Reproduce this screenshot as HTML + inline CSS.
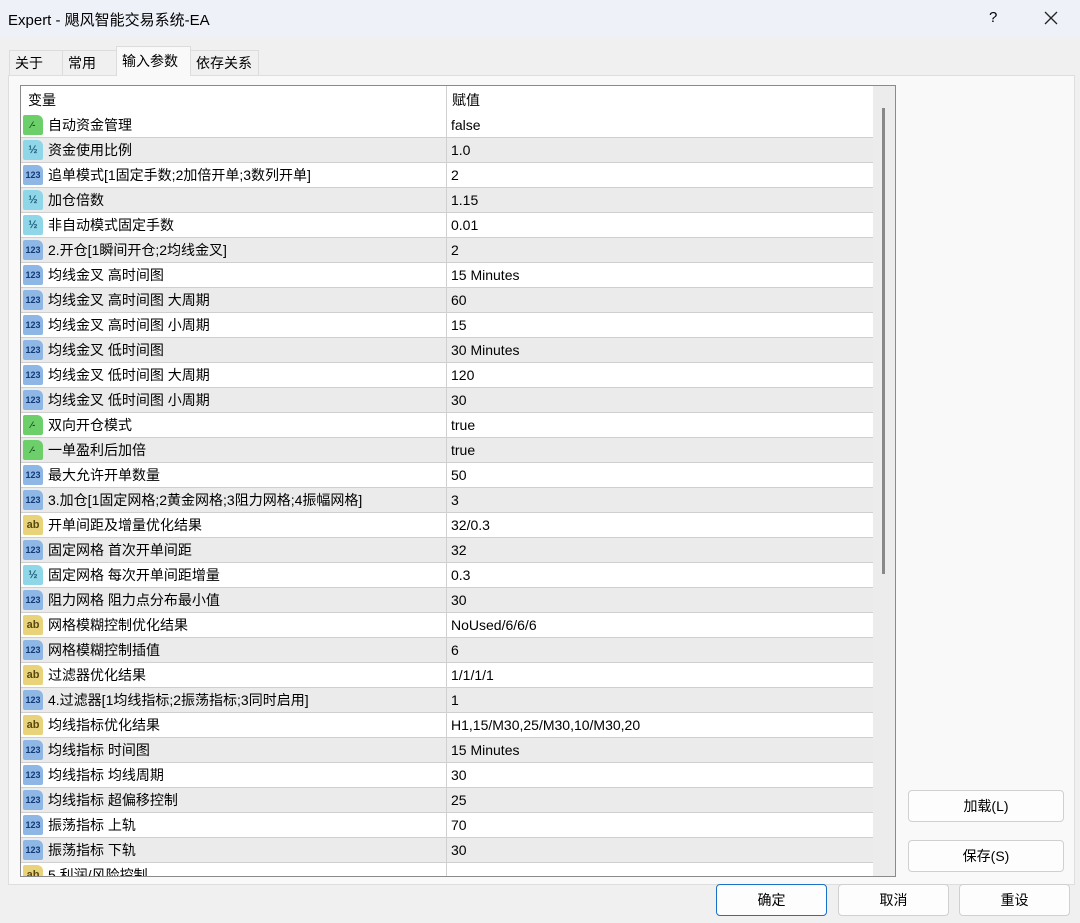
<!DOCTYPE html>
<html><head><meta charset="utf-8"><style>
*{margin:0;padding:0;box-sizing:border-box}
body{width:1080px;height:923px;background:#f0f0f0;font-family:"Liberation Sans","Noto Sans CJK SC",sans-serif;font-size:14px;color:#000;position:relative;overflow:hidden}
.title{position:absolute;left:0;top:0;width:1080px;height:37px;background:#eef1f8}
.title .t{position:absolute;left:8px;top:9px;font-size:15px}
.title .q{position:absolute;left:989px;top:9px;font-size:15px}
.title .x{position:absolute;left:1043px;top:10px}
.tab{position:absolute;top:50px;height:26px;border:1px solid #dcdcdc;border-bottom:none;background:#f0f0f0;padding:0 5px;line-height:25px;font-size:14px;white-space:nowrap}
.tab.a{top:46px;height:30px;background:#f9f9f9;z-index:2;line-height:28px}
.panel{position:absolute;left:8px;top:75px;width:1067px;height:810px;background:#f9f9f9;border:1px solid #dedede}
.tbl{position:absolute;left:20px;top:85px;width:876px;height:792px;border:1px solid #8a8a8a;background:#fff;overflow:hidden}
.hdr{position:absolute;left:0;top:0;height:27px;width:852px;line-height:27px}
.hdr span{position:absolute;top:1px}
.row{position:absolute;left:0;width:852px;height:25px;border-bottom:1px solid #cfcfcf;line-height:24px}
.row.g{background:#ebebeb}
.row .n{position:absolute;left:27px;top:0;white-space:nowrap}
.row .v{position:absolute;left:430px;top:0;white-space:nowrap}
.col{position:absolute;left:425px;top:0;width:1px;height:792px;background:#d0d0d0}
.ic{position:absolute;left:2px;top:2px;width:20px;height:20px;border-radius:2px 6px 2px 2px;font-size:9px;font-weight:bold;text-align:center;line-height:20px;font-style:normal;font-family:"Liberation Sans",sans-serif}
.b{background:#6ccf6a;color:#14501a}
.d{background:#8fd6e8;color:#1d5c7a;font-size:11px}
.i{background:#8fb7e6;color:#123a77}
.s{background:#e8d27a;color:#5a4a10;font-size:11px}
.sb{position:absolute;left:852px;top:0;width:22px;height:792px;background:#ececec}
.th{position:absolute;left:9px;top:22px;width:3px;height:466px;background:#888}
.btn{position:absolute;height:32px;border:1px solid #d0d0d0;border-radius:4px;background:#fdfdfd;text-align:center;line-height:30px;font-size:14px}
</style></head><body>
<div class="title"><span class="t">Expert - 飓风智能交易系统-EA</span><span class="q">?</span>
<svg class="x" width="16" height="16" viewBox="0 0 16 16"><path d="M2 2L14 14M14 2L2 14" stroke="#222" stroke-width="1.3"/></svg></div>
<div class="tab" style="left:9px;width:54px">关于</div>
<div class="tab" style="left:62px;width:55px">常用</div>
<div class="tab a" style="left:116px;width:75px">输入参数</div>
<div class="tab" style="left:190px;width:69px">依存关系</div>
<div class="panel"></div>
<div class="tbl">
<div class="hdr"><span style="left:7px">变量</span><span style="left:431px">赋值</span></div>
<div class="row" style="top:27px"><i class="ic b">⁄-</i><span class="n">自动资金管理</span><span class="v">false</span></div>
<div class="row g" style="top:52px"><i class="ic d">½</i><span class="n">资金使用比例</span><span class="v">1.0</span></div>
<div class="row" style="top:77px"><i class="ic i">123</i><span class="n">追单模式[1固定手数;2加倍开单;3数列开单]</span><span class="v">2</span></div>
<div class="row g" style="top:102px"><i class="ic d">½</i><span class="n">加仓倍数</span><span class="v">1.15</span></div>
<div class="row" style="top:127px"><i class="ic d">½</i><span class="n">非自动模式固定手数</span><span class="v">0.01</span></div>
<div class="row g" style="top:152px"><i class="ic i">123</i><span class="n">2.开仓[1瞬间开仓;2均线金叉]</span><span class="v">2</span></div>
<div class="row" style="top:177px"><i class="ic i">123</i><span class="n">均线金叉 高时间图</span><span class="v">15 Minutes</span></div>
<div class="row g" style="top:202px"><i class="ic i">123</i><span class="n">均线金叉 高时间图 大周期</span><span class="v">60</span></div>
<div class="row" style="top:227px"><i class="ic i">123</i><span class="n">均线金叉 高时间图 小周期</span><span class="v">15</span></div>
<div class="row g" style="top:252px"><i class="ic i">123</i><span class="n">均线金叉 低时间图</span><span class="v">30 Minutes</span></div>
<div class="row" style="top:277px"><i class="ic i">123</i><span class="n">均线金叉 低时间图 大周期</span><span class="v">120</span></div>
<div class="row g" style="top:302px"><i class="ic i">123</i><span class="n">均线金叉 低时间图 小周期</span><span class="v">30</span></div>
<div class="row" style="top:327px"><i class="ic b">⁄-</i><span class="n">双向开仓模式</span><span class="v">true</span></div>
<div class="row g" style="top:352px"><i class="ic b">⁄-</i><span class="n">一单盈利后加倍</span><span class="v">true</span></div>
<div class="row" style="top:377px"><i class="ic i">123</i><span class="n">最大允许开单数量</span><span class="v">50</span></div>
<div class="row g" style="top:402px"><i class="ic i">123</i><span class="n">3.加仓[1固定网格;2黄金网格;3阻力网格;4振幅网格]</span><span class="v">3</span></div>
<div class="row" style="top:427px"><i class="ic s">ab</i><span class="n">开单间距及增量优化结果</span><span class="v">32/0.3</span></div>
<div class="row g" style="top:452px"><i class="ic i">123</i><span class="n">固定网格 首次开单间距</span><span class="v">32</span></div>
<div class="row" style="top:477px"><i class="ic d">½</i><span class="n">固定网格 每次开单间距增量</span><span class="v">0.3</span></div>
<div class="row g" style="top:502px"><i class="ic i">123</i><span class="n">阻力网格 阻力点分布最小值</span><span class="v">30</span></div>
<div class="row" style="top:527px"><i class="ic s">ab</i><span class="n">网格模糊控制优化结果</span><span class="v">NoUsed/6/6/6</span></div>
<div class="row g" style="top:552px"><i class="ic i">123</i><span class="n">网格模糊控制插值</span><span class="v">6</span></div>
<div class="row" style="top:577px"><i class="ic s">ab</i><span class="n">过滤器优化结果</span><span class="v">1/1/1/1</span></div>
<div class="row g" style="top:602px"><i class="ic i">123</i><span class="n">4.过滤器[1均线指标;2振荡指标;3同时启用]</span><span class="v">1</span></div>
<div class="row" style="top:627px"><i class="ic s">ab</i><span class="n">均线指标优化结果</span><span class="v">H1,15/M30,25/M30,10/M30,20</span></div>
<div class="row g" style="top:652px"><i class="ic i">123</i><span class="n">均线指标 时间图</span><span class="v">15 Minutes</span></div>
<div class="row" style="top:677px"><i class="ic i">123</i><span class="n">均线指标 均线周期</span><span class="v">30</span></div>
<div class="row g" style="top:702px"><i class="ic i">123</i><span class="n">均线指标 超偏移控制</span><span class="v">25</span></div>
<div class="row" style="top:727px"><i class="ic i">123</i><span class="n">振荡指标 上轨</span><span class="v">70</span></div>
<div class="row g" style="top:752px"><i class="ic i">123</i><span class="n">振荡指标 下轨</span><span class="v">30</span></div>
<div class="row" style="top:777px"><i class="ic s">ab</i><span class="n">5.利润/风险控制</span><span class="v"></span></div>
<div class="col"></div>
<div class="sb"><div class="th"></div></div>
</div>
<div class="btn" style="left:908px;top:790px;width:156px">加载(L)</div>
<div class="btn" style="left:908px;top:840px;width:156px">保存(S)</div>
<div class="btn" style="left:716px;top:884px;width:111px;border:1px solid #1a6fc9">确定</div>
<div class="btn" style="left:838px;top:884px;width:111px">取消</div>
<div class="btn" style="left:959px;top:884px;width:111px">重设</div>
</body></html>
